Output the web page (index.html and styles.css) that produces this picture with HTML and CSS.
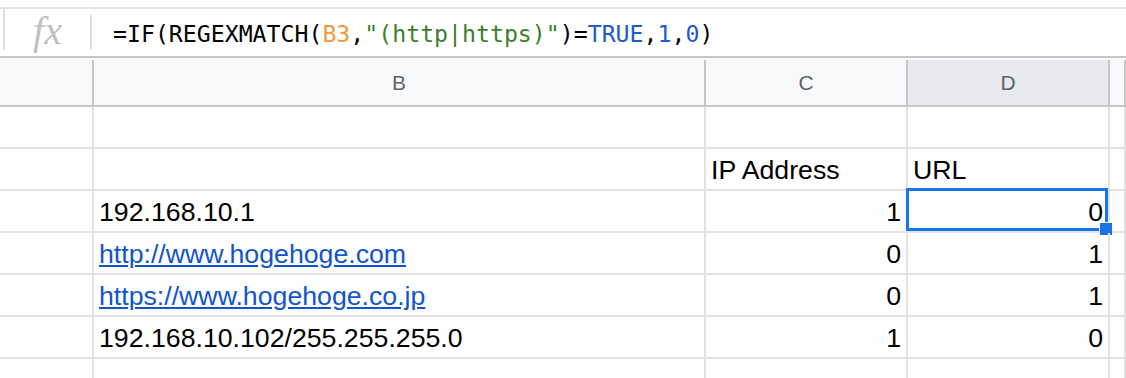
FILE: index.html
```html
<!DOCTYPE html>
<html lang="en">
<head>
<meta charset="utf-8"/>
<title>Sheet</title>
<link rel="stylesheet" href="styles.css">
</head>
<body>
<div class="formula-bar">
  <div class="edge"></div>
  <div class="fx">fx</div>
  <div class="sep"></div>
  <div class="formula">=IF(REGEXMATCH(<span class="ref">B3</span>,<span class="str">"(http|https)"</span>)=<span class="kw">TRUE</span>,<span class="kw">1</span>,<span class="kw">0</span>)</div>
</div>

<div class="sheet">
  <div class="row head">
    <div class="cell"></div>
    <div class="cell">B</div>
    <div class="cell">C</div>
    <div class="cell active">D</div>
    <div class="cell"></div>
  </div>
  <div class="row">
    <div class="cell"></div><div class="cell"></div><div class="cell"></div><div class="cell"></div><div class="cell"></div>
  </div>
  <div class="row">
    <div class="cell"></div>
    <div class="cell"></div>
    <div class="cell">IP Address</div>
    <div class="cell">URL</div>
    <div class="cell"></div>
  </div>
  <div class="row">
    <div class="cell"></div>
    <div class="cell">192.168.10.1</div>
    <div class="cell num">1</div>
    <div class="cell num selected">0<span class="handle"></span></div>
    <div class="cell"></div>
  </div>
  <div class="row">
    <div class="cell"></div>
    <div class="cell"><a href="#">http://www.hogehoge.com</a></div>
    <div class="cell num">0</div>
    <div class="cell num">1</div>
    <div class="cell"></div>
  </div>
  <div class="row">
    <div class="cell"></div>
    <div class="cell"><a href="#">https://www.hogehoge.co.jp</a></div>
    <div class="cell num">0</div>
    <div class="cell num">1</div>
    <div class="cell"></div>
  </div>
  <div class="row">
    <div class="cell"></div>
    <div class="cell">192.168.10.102/255.255.255.0</div>
    <div class="cell num">1</div>
    <div class="cell num">0</div>
    <div class="cell"></div>
  </div>
  <div class="row last">
    <div class="cell"></div><div class="cell"></div><div class="cell"></div><div class="cell"></div><div class="cell"></div>
  </div>
</div>
</body>
</html>
```

FILE: styles.css
```css
body {
  margin: 0;
  height: 378px;
  background: #fff;
  font-family: 'Liberation Sans', Arial, sans-serif;
  overflow: hidden;
}

/* formula bar */
.formula-bar {
  display: flex;
  height: 47px;
  margin-top: 7px;
  border-top: 2px solid #e3e3e3;
}
.edge {
  width: 2px;
  height: 41px;
  margin-left: 3px;
  background: #e0e0e0;
}
.fx {
  width: 85px;
  text-align: center;
  font-family: 'Liberation Serif', serif;
  font-style: italic;
  font-size: 40px;
  line-height: 44px;
  color: #bdc1c6;
}
.sep {
  width: 2px;
  height: 34px;
  margin-top: 6px;
  background: #dadce0;
}
.formula {
  margin-left: 21px;
  padding-top: 2px;
  font-family: 'DejaVu Sans Mono', monospace;
  font-size: 23.2px;
  line-height: 45px;
  color: #000;
  white-space: nowrap;
}
.formula .ref { color: #ef9a3c; }
.formula .str { color: #3a7f2a; }
.formula .kw { color: #2159d1; }

/* grid */
.row {
  display: grid;
  grid-template-columns: 94px 612px 202px 202px 1fr;
  height: 42px;
  border-bottom: 2px solid #e2e2e3;
  box-sizing: border-box;
}
.row.last { height: 20px; border-bottom: none; }
.cell {
  position: relative;
  display: flex;
  align-items: flex-end;
  padding: 0 5px 4px 5px;
  border-right: 2px solid #e2e2e3;
  font-size: 26.7px;
  line-height: 30px;
  color: #000;
  white-space: nowrap;
}
.cell.num { justify-content: flex-end; }
.cell a { color: #1155cc; text-decoration: underline; }

.row.head {
  height: 51px;
  padding-top: 2px;
  border-top: 2px solid #c4c7c5;
  border-bottom: 2px solid #c4c7c5;
  background: #f8f9fa;
}
.row.head .cell {
  justify-content: center;
  align-items: center;
  padding: 0;
  border-right-color: #c4c7c5;
  font-size: 21px;
  line-height: 45px;
  color: #5f6368;
}
.row.head .cell.active { background: #e8eaed; }

.cell.selected::before {
  content: "";
  position: absolute;
  top: -3px;
  left: -2px;
  right: 0;
  bottom: 0;
  border: 3px solid #1a73e8;
}
.handle {
  position: absolute;
  right: -4px;
  bottom: -4px;
  width: 12px;
  height: 12px;
  background: #1a73e8;
  border: 1px solid #fff;
  border-right: none;
  border-bottom: none;
}
```
